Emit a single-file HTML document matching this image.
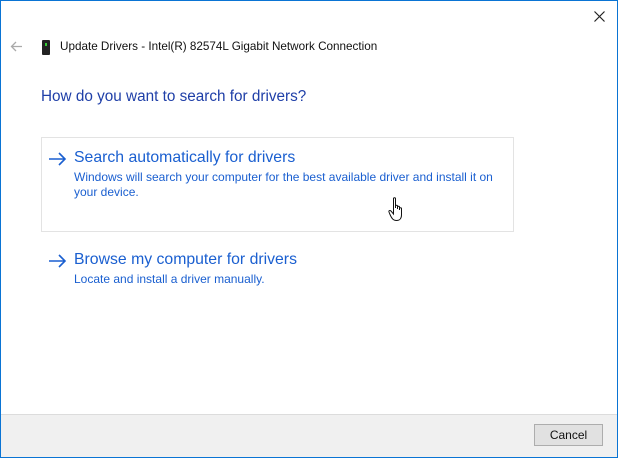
<!DOCTYPE html>
<html><head><style>
html,body{margin:0;padding:0}
body{width:618px;height:458px;position:relative;background:#fff;font-family:"Liberation Sans",sans-serif;overflow:hidden}
.frame{position:absolute;inset:0;border:1px solid #0a74d4;box-sizing:border-box}
.abs{position:absolute;white-space:nowrap}
.back{left:10px;top:38px;font-size:15px;color:#aaa}
.title{left:60px;top:40px;font-size:11.7px;color:#111}
.h{left:41px;top:88px;font-size:15.3px;color:#1f3fa8}
.card{position:absolute;left:41px;top:137px;width:471px;height:93px;border:1px solid #e3e3e3}
.lt{font-size:15.8px;color:#1a5fd0}
.ld{font-size:12px;color:#1a5fd0;line-height:15px}
.footer{position:absolute;left:1px;right:1px;top:414px;bottom:1px;background:#f0f0f0;border-top:1px solid #dcdcdc}
.btn{position:absolute;left:534px;top:424px;width:67px;height:20px;border:1px solid #adadad;background:#e1e1e1;font-size:12px;text-align:center;line-height:20px;color:#111}
</style></head><body>
<svg class="abs" style="left:594px;top:11px" width="11" height="11"><path d="M0.5 0.5L10.5 10.5M10.5 0.5L0.5 10.5" stroke="#222" stroke-width="1.2"/></svg>
<svg class="abs" style="left:10px;top:41px" width="13" height="11"><path d="M12 5.5H1.5M6 1L1.5 5.5L6 10" stroke="#aaa" stroke-width="1.3" fill="none"/></svg>
<svg class="abs" style="left:41px;top:40px" width="10" height="15"><rect x="1" y="0" width="8" height="15" rx="1" fill="#222"/><rect x="4" y="3" width="2" height="3" fill="#3c3"/></svg>
<div class="abs title">Update Drivers - Intel(R) 82574L Gigabit Network Connection</div>
<div class="abs h">How do you want to search for drivers?</div>
<div class="card"></div>
<svg class="abs" style="left:48px;top:152px" width="20" height="14"><path d="M1 7H17M11 1L17 7L11 13" stroke="#1a5fd0" stroke-width="1.6" fill="none"/></svg>
<div class="abs lt" style="left:74px;top:149px">Search automatically for drivers</div>
<div class="abs ld" style="left:74px;top:170px">Windows will search your computer for the best available driver and install it on<br>your device.</div>
<svg class="abs" style="left:48px;top:254px" width="20" height="14"><path d="M1 7H17M11 1L17 7L11 13" stroke="#1a5fd0" stroke-width="1.6" fill="none"/></svg>
<div class="abs lt" style="left:74px;top:251px">Browse my computer for drivers</div>
<div class="abs ld" style="left:74px;top:272px">Locate and install a driver manually.</div>
<svg class="abs" style="left:388px;top:197px" width="20" height="26" viewBox="0 0 20 26"><path d="M5.5 1.5C5.5 0.5 7.5 0.5 7.5 1.5V11V9C7.5 8 9.5 8 9.5 9V12V10C9.5 9 11.5 9 11.5 10V13V11.5C11.5 10.5 13.5 10.5 13.5 11.5V18C13.5 21.5 11.5 23.5 8.5 23.5C5.5 23.5 4 22 2 17.5L1 15C0.5 13.5 2 13 3 14L5.5 17Z" fill="#fff" stroke="#111" stroke-width="1"/></svg>
<div class="footer"></div>
<div class="btn">Cancel</div>
<div class="frame"></div>
</body></html>
